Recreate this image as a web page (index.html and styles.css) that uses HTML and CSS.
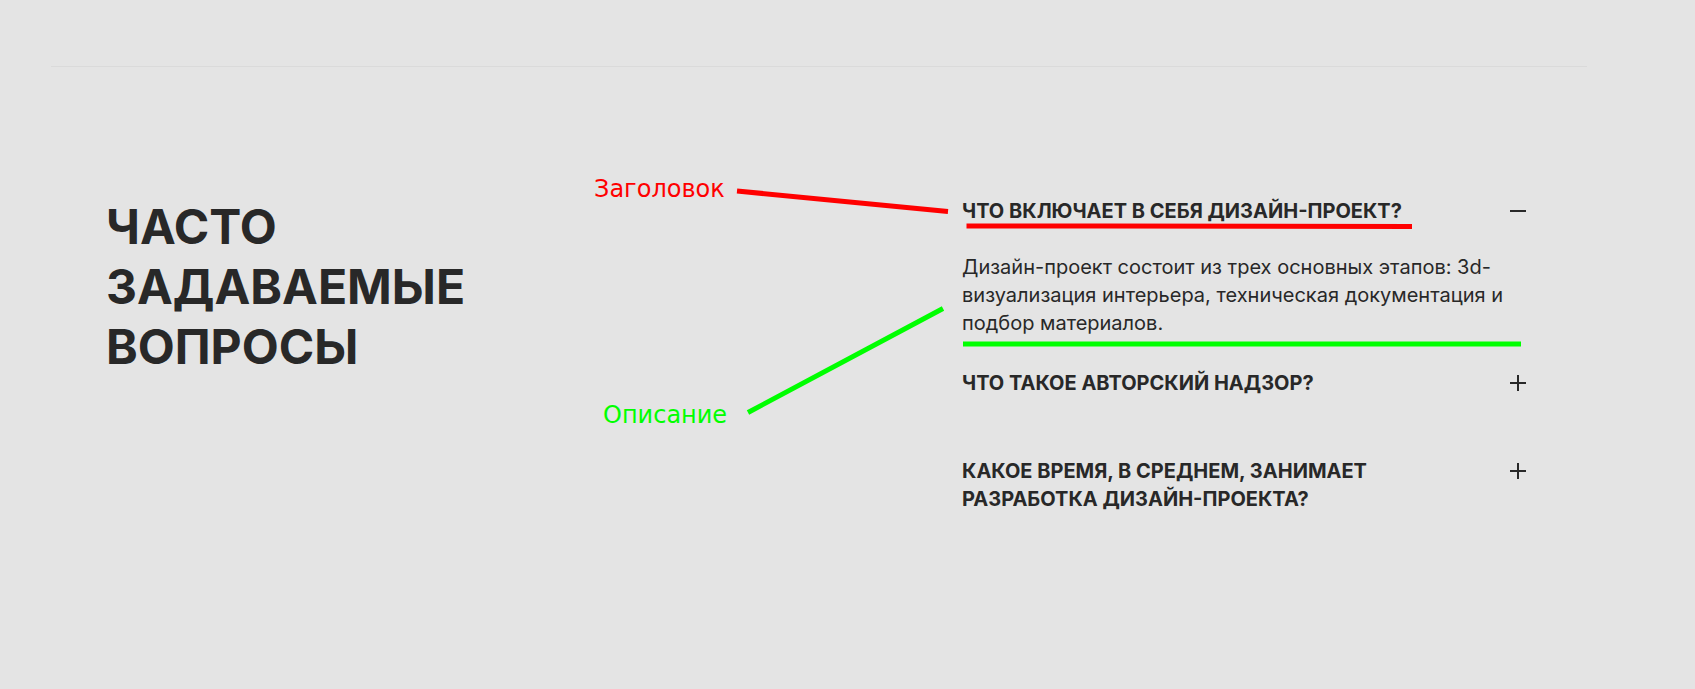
FILE: index.html
```html
<!DOCTYPE html>
<html lang="ru">
<head>
  <meta charset="utf-8">
  <meta name="viewport" content="width=device-width, initial-scale=1">
  <title>Часто задаваемые вопросы</title>
  <link rel="stylesheet" href="styles.css">
</head>
<body>
  <main class="page">
    <section class="faq">
      <h1 class="faq-heading">Часто задаваемые вопросы</h1>
      <div class="faq-list">
        <article class="faq-item faq-item-open">
          <h2 class="faq-title">
            <button class="faq-toggle" type="button" aria-expanded="true" aria-controls="answer-1">
              <span class="faq-question">Что включает в себя дизайн-проект?</span>
              <svg class="faq-icon" viewBox="0 0 16 28" aria-hidden="true"><path d="M0 14h16"/></svg>
            </button>
          </h2>
          <p class="faq-answer" id="answer-1">Дизайн-проект состоит из трех основных этапов: 3d-визуализация интерьера, техническая документация и подбор материалов.</p>
        </article>
        <article class="faq-item">
          <h2 class="faq-title">
            <button class="faq-toggle" type="button" aria-expanded="false">
              <span class="faq-question">Что такое авторский надзор?</span>
              <svg class="faq-icon" viewBox="0 0 16 28" aria-hidden="true"><path d="M0 14h16M8 6v16"/></svg>
            </button>
          </h2>
        </article>
        <article class="faq-item">
          <h2 class="faq-title">
            <button class="faq-toggle" type="button" aria-expanded="false">
              <span class="faq-question">Какое время, в среднем, занимает разработка дизайн-проекта?</span>
              <svg class="faq-icon" viewBox="0 0 16 28" aria-hidden="true"><path d="M0 14h16M8 6v16"/></svg>
            </button>
          </h2>
        </article>
        <svg class="notes" viewBox="0 0 960 280">
          <g class="note-title">
            <text x="32" y="40">Заголовок</text>
            <path d="M175 34L386 54.500M404.500 69H540L850 69.500"/>
          </g>
          <g class="note-description">
            <text x="41" y="266">Описание</text>
            <path d="M186 255.500L381 151.500M401 187H959"/>
          </g>
        </svg>
      </div>
    </section>
  </main>
</body>
</html>
```
FILE: styles.css
```css
* {
  box-sizing: border-box;
}

body {
  margin: 0;
  background: #e4e4e4;
  color: #282828;
  font-family: Inter, "Liberation Sans", sans-serif;
}

.page {
  padding: 66px 108px 66px 51px;
}

.faq {
  display: grid;
  grid-template-columns: minmax(0, 400px) minmax(0, 564px);
  justify-content: space-between;
  padding: 130px 61px 0 55px;
  border-top: 1px solid #dadada;
}

.faq-heading {
  margin: 0;
  font-size: 48px;
  font-weight: 700;
  line-height: 60px;
  text-transform: uppercase;
}

.faq-list {
  position: relative;
  display: flex;
  flex-direction: column;
  gap: 60px;
}

.faq-item-open {
  margin-bottom: -28px;
}

.faq-title {
  margin: 0;
  font-size: 20px;
  line-height: 28px;
}

.faq-toggle {
  display: flex;
  justify-content: space-between;
  align-items: flex-start;
  gap: 40px;
  width: 100%;
  padding: 0;
  border: 0;
  background: none;
  color: inherit;
  font: inherit;
  text-align: left;
  text-transform: uppercase;
  cursor: pointer;
}

.faq-icon {
  flex: none;
  width: 16px;
  height: 28px;
  fill: none;
  stroke: #282828;
  stroke-width: 2;
}

.faq-answer {
  margin: 28px 0 0;
  padding-right: 16px;
  font-size: 20px;
  line-height: 28px;
}

/* Callouts drawn over the list and the space to its left */
.notes {
  position: absolute;
  top: -40px;
  left: -400px;
  width: 960px;
  height: 280px;
  pointer-events: none;
  font-family: "DejaVu Sans", sans-serif;
  font-size: 24px;
}

.notes path {
  fill: none;
  stroke-width: 5;
}

.note-title {
  fill: #ff0000;
}

.note-title path {
  stroke: #ff0000;
}

.note-description {
  fill: #00ff00;
}

.note-description path {
  stroke: #00ff00;
}
```
